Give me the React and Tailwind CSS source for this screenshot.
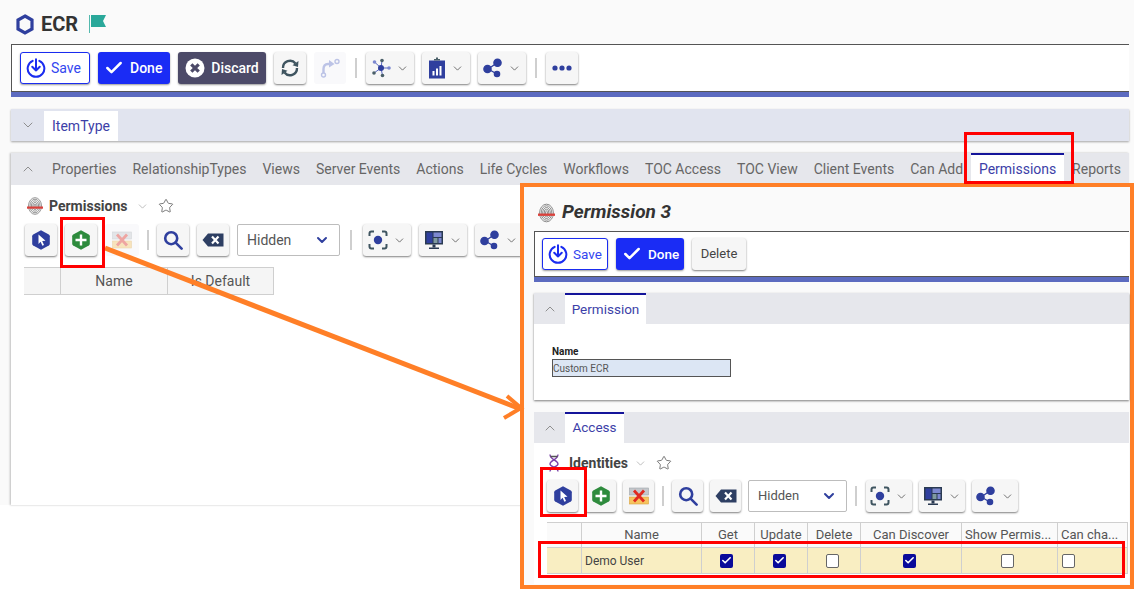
import { Check, ChevronDown, ChevronUp, Star } from "lucide-react";

const font = { fontFamily: "Roboto, sans-serif" };

const HexIcon = ({ fill = "#2f3f9e", children }) => (
  <svg width="18" height="20" viewBox="0 0 18 20">
    <path d="M9 0.3 L16.8 4.6 Q17.8 5.2 17.8 6.2 V13.8 Q17.8 14.8 16.8 15.4 L9 19.7 L1.2 15.4 Q0.2 14.8 0.2 13.8 V6.2 Q0.2 5.2 1.2 4.6 Z" fill={fill} />
    {children}
  </svg>
);

const HexPointer = () => (
  <HexIcon>
    <path d="M6.5 4.5 L13.5 10.8 L10.2 11 L12 15 L10.4 15.8 L8.6 11.8 L6.5 14 Z" fill="#fff" />
  </HexIcon>
);

const HexPlus = () => (
  <HexIcon fill="#2e8b3d">
    <path d="M9 4.5 V15.5 M3.5 10 H14.5" stroke="#fff" strokeWidth="2.4" />
  </HexIcon>
);

const SaveIcon = ({ size = 20 }) => (
  <svg width={size} height={size} viewBox="0 0 24 24" fill="none" stroke="#1a2cf0" strokeWidth="2.4" strokeLinecap="round" strokeLinejoin="round">
    <path d="M8 3.4 A10 10 0 1 0 16 3.4" />
    <path d="M12 1.5 V15 M7.5 10.5 L12 15 L16.5 10.5" />
  </svg>
);

const DiscardIcon = () => (
  <svg width="20" height="20" viewBox="0 0 20 20">
    <circle cx="10" cy="10" r="9.5" fill="#fff" />
    <path d="M6.3 6.3 L13.7 13.7 M13.7 6.3 L6.3 13.7" stroke="#4c4a68" strokeWidth="3.2" />
  </svg>
);

const RefreshIcon = () => (
  <svg width="20" height="20" viewBox="0 0 20 20" fill="none" stroke="#3f5560" strokeWidth="2.4">
    <path d="M3 10 A7 7 0 0 1 15.5 5.5" />
    <path d="M17 10 A7 7 0 0 1 4.5 14.5" />
    <path d="M18.5 3 L18 9 L12.5 7.2 Z" fill="#3f5560" stroke="none" />
    <path d="M1.5 17 L2 11 L7.5 12.8 Z" fill="#3f5560" stroke="none" />
  </svg>
);

const BranchIcon = () => (
  <svg width="20" height="20" viewBox="0 0 20 20" fill="none" stroke="#bcc3e6" strokeWidth="1.4">
    <circle cx="3.5" cy="17" r="2" />
    <circle cx="17" cy="3.5" r="2" />
    <path d="M3.5 15 V11 Q3.5 6 8 6 H9.5" strokeWidth="2.4" />
    <path d="M9 2 L14.5 6 L9 9.5 Z" fill="#bcc3e6" stroke="none" />
  </svg>
);

const ClusterIcon = () => (
  <svg width="20" height="20" viewBox="0 0 20 20" stroke="#5c6bc0" strokeWidth="1">
    <path d="M10 10 L3.5 4 M10 10 L11 2.5 M10 10 L18 10 M10 10 L11.5 17.5 M10 10 L3 15" />
    <circle cx="10" cy="10" r="3" fill="#2f3f9e" stroke="none" />
    <circle cx="3.5" cy="4" r="1.8" fill="#7c88d0" stroke="none" />
    <circle cx="11" cy="2.5" r="1.8" fill="#4a5f68" stroke="none" />
    <circle cx="18" cy="10" r="1.8" fill="#7c88d0" stroke="none" />
    <circle cx="11.5" cy="17.5" r="1.8" fill="#4a5f68" stroke="none" />
    <circle cx="3" cy="15" r="1.8" fill="#4a5f68" stroke="none" />
  </svg>
);

const ReportIcon = () => (
  <svg width="18" height="22" viewBox="0 0 18 22">
    <rect x="1" y="3.5" width="16" height="18" fill="#2f3f9e" />
    <path d="M6 3.5 V2 H8 V0.5 H10 V2 H12 V3.5 Z" fill="#4a5f68" />
    <rect x="4.5" y="14" width="2" height="4.5" fill="#fff" />
    <rect x="8" y="11.5" width="2" height="7" fill="#fff" />
    <rect x="11.5" y="9" width="2" height="9.5" fill="#fff" />
  </svg>
);

const ShareIcon = () => (
  <svg width="20" height="20" viewBox="0 0 20 20" stroke="#2f3f9e" strokeWidth="1.4">
    <path d="M5 11 L14 5 M5 11 L14 16" />
    <circle cx="4.5" cy="11" r="3.6" fill="#2f3f9e" />
    <circle cx="14.5" cy="4.8" r="3.6" fill="#2f3f9e" />
    <circle cx="14" cy="16" r="2.6" fill="#2f3f9e" />
  </svg>
);

const DotsIcon = () => (
  <svg width="20" height="6" viewBox="0 0 20 6" fill="#2f3f9e">
    <circle cx="3" cy="3" r="2.6" />
    <circle cx="10" cy="3" r="2.6" />
    <circle cx="17" cy="3" r="2.6" />
  </svg>
);

const DeleteRowIcon = ({ faded }) => (
  <svg width="20" height="20" viewBox="0 0 20 20" opacity={faded ? 0.4 : 1}>
    <rect x="0.5" y="2" width="19" height="7" fill="#c4c8cc" stroke="#9ea4a8" strokeWidth="0.6" />
    <rect x="0.5" y="11" width="19" height="7" fill="#f6c45f" stroke="#d9a23c" strokeWidth="0.6" />
    <path d="M5 4.5 L15 15.5 M15 4.5 L5 15.5" stroke="#e02a20" strokeWidth="2.8" />
  </svg>
);

const SearchIcon = () => (
  <svg width="20" height="20" viewBox="0 0 20 20" fill="none" stroke="#2f3f9e" strokeWidth="2.6">
    <circle cx="8.2" cy="8.2" r="6" />
    <path d="M12.6 12.6 L18.6 18.6" strokeLinecap="round" />
  </svg>
);

const BackspaceIcon = () => (
  <svg width="22" height="14" viewBox="0 0 22 14">
    <path d="M6 0.5 H21.5 V13.5 H6 L0.5 7 Z" fill="#2e3f63" />
    <path d="M10 3.5 L16.5 10.5 M16.5 3.5 L10 10.5" stroke="#fff" strokeWidth="2.2" />
  </svg>
);

const FocusIcon = () => (
  <svg width="20" height="20" viewBox="0 0 20 20" fill="none" stroke="#3f5560" strokeWidth="2">
    <path d="M6 1.5 H3.5 Q1.5 1.5 1.5 3.5 V6 M14 1.5 H16.5 Q18.5 1.5 18.5 3.5 V6 M6 18.5 H3.5 Q1.5 18.5 1.5 16.5 V14 M14 18.5 H16.5 Q18.5 18.5 18.5 16.5 V14" />
    <circle cx="10" cy="10" r="4.2" fill="#2f3f9e" stroke="none" />
  </svg>
);

const MonitorIcon = () => (
  <svg width="20" height="20" viewBox="0 0 20 20">
    <rect x="1" y="1" width="18" height="13.5" fill="#2a3a52" />
    <rect x="2.5" y="2.5" width="6" height="10.5" fill="#2f3f9e" />
    <rect x="9.5" y="2.5" width="8" height="4.5" fill="#7c88d0" />
    <rect x="9.5" y="8" width="4" height="5" fill="#7f9aa0" />
    <rect x="14.5" y="8" width="3" height="5" fill="#7c88d0" />
    <rect x="8.5" y="14.5" width="3" height="3" fill="#2a3a52" />
    <rect x="5" y="17.5" width="10" height="1.5" fill="#2a3a52" />
  </svg>
);

// grey fingerprint with the red scan line
const PrintIcon = ({ width = 16, height = 18 }) => (
  <svg width={width} height={height} viewBox="0 0 16 18" fill="none" stroke="#777" strokeWidth="0.8">
    <ellipse cx="8" cy="9" rx="6.5" ry="8.3" />
    <ellipse cx="8" cy="9" rx="5" ry="6.8" />
    <ellipse cx="8" cy="9" rx="3.6" ry="5.2" />
    <ellipse cx="8" cy="9" rx="2.2" ry="3.6" />
    <ellipse cx="8" cy="9" rx="0.9" ry="2" />
    <rect x="0" y="9.5" width="16" height="2.2" fill="#d9413b" stroke="none" />
  </svg>
);

const HelixIcon = () => (
  <svg width="14" height="18" viewBox="0 0 14 18" fill="none" stroke="#7a3fa8" strokeWidth="1.3">
    <path d="M3 0.5 C3 6 11 6 11 10 C11 13 3 13 3 17.5" />
    <path d="M11 0.5 C11 6 3 6 3 10 C3 13 11 13 11 17.5" />
    <path d="M3.5 2.5 H10.5 M3.5 14.5 H10.5" stroke="#555" />
  </svg>
);

// generic gray raised button
const ToolBtn = ({ children, className = "w-8", caret, disabled }) => (
  <div
    className={`h-8 flex items-center justify-center gap-[5px] rounded-[3px] shrink-0 ${
      disabled ? "bg-[#f9f9fb]" : "bg-[#f6f6f6] shadow-[0_1px_2px_rgba(0,0,0,0.5)]"
    } ${className}`}
  >
    {children}
    {caret && <ChevronDown size={13} color="#555" strokeWidth={1.5} />}
  </div>
);

const Sep = ({ className = "mx-[1px]" }) => <div className={`w-[2px] h-5 bg-[#cfcfcf] shrink-0 ${className}`} />;

const SaveBtn = ({ className }) => (
  <div className={`h-8 flex items-center justify-start gap-[5px] pl-[5px] bg-white border border-[#1a2cf0] rounded-[3px] shadow-[0_1px_2px_rgba(0,0,0,0.4)] text-[#3346f0] shrink-0 ${className}`}>
    <SaveIcon />
    Save
  </div>
);

const DoneBtn = ({ className }) => (
  <div className={`h-8 flex items-center justify-start gap-[6px] pl-[6px] bg-[#1a2cf5] rounded-[3px] shadow-[0_1px_2px_rgba(0,0,0,0.4)] font-medium text-white shrink-0 ${className}`}>
    <Check size={20} color="#fff" strokeWidth={3} />
    Done
  </div>
);

const HiddenSelect = ({ className }) => (
  <div className={`h-8 flex items-center justify-between pl-[9px] pr-[9px] bg-white border border-[#bdbdbd] rounded-[2px] text-[#555] shrink-0 ${className}`}>
    Hidden
    <ChevronDown size={16} color="#2f3f9e" strokeWidth={3} />
  </div>
);

const CheckCell = ({ on }) =>
  on ? (
    <div className="w-[13px] h-[14px] rounded-[2px] bg-[#0a0a9a] flex items-center justify-center">
      <Check size={11} color="#fff" strokeWidth={3.5} />
    </div>
  ) : (
    <div className="w-[13px] h-[14px] rounded-[2px] bg-white border border-[#666]" />
  );

const topTabs = [
  "Properties",
  "RelationshipTypes",
  "Views",
  "Server Events",
  "Actions",
  "Life Cycles",
  "Workflows",
  "TOC Access",
  "TOC View",
  "Client Events",
  "Can Add",
];

const columns = [
  { name: "Name", w: "w-[120px]" },
  { name: "Get", w: "w-[53px]", on: true },
  { name: "Update", w: "w-[53px]", on: true },
  { name: "Delete", w: "w-[53px]", on: false },
  { name: "Can Discover", w: "w-[101px]", on: true },
  { name: "Show Permis...", w: "w-[96px]", on: false, left: true },
  { name: "Can cha...", w: "w-[70px]", on: false, left: true },
];

const PanelHeader = ({ label, tabClass }) => (
  <div className="h-[31px] bg-[#e6e7ec] flex">
    <div className="w-[31px] flex items-center justify-center">
      <ChevronUp size={16} color="#888" strokeWidth={1.4} />
    </div>
    <div className={`bg-white border-t-2 border-[#14149a] flex items-center justify-center text-[13.5px] text-[#3d3fa8] ${tabClass}`}>
      {label}
    </div>
  </div>
);

export default function App() {
  return (
    <div className="relative w-[1134px] h-[590px] overflow-hidden bg-white" style={font}>
      {/* Background page */}
      <div className="h-[505px] bg-[#fafafa] pl-[11px] pr-[5px]">
        <div className="h-[44px] flex items-center pl-[5px] pt-[4px]">
          <svg width="18" height="21" viewBox="0 0 18 21" fill="none" stroke="#2f3f9e" strokeWidth="3.2">
            <path d="M9 2 L16 6 V15 L9 19 L2 15 V6 Z" />
          </svg>
          <span className="ml-[7px] text-[20px] font-bold text-[#333]">ECR</span>
          <svg width="18" height="18" viewBox="0 0 18 18" className="ml-[11px]">
            <path d="M0.5 0 V18" stroke="#2aa89a" strokeWidth="0.8" />
            <path d="M2 0 H17 L14 6 L17 12 H2 Z" fill="#2aa89a" />
          </svg>
        </div>

        {/* Main toolbar */}
        <div className="h-[48px] bg-white border-y border-l border-[#555] flex items-center gap-[8px] pl-[8px] text-[14px]">
          <SaveBtn className="w-[70px]" />
          <DoneBtn className="w-[72px]" />
          <div className="w-[88px] h-8 flex items-center justify-center gap-[6px] bg-[#4c4a68] rounded-[3px] shadow-[0_1px_2px_rgba(0,0,0,0.4)] font-medium text-white shrink-0">
            <DiscardIcon />
            Discard
          </div>
          <ToolBtn><RefreshIcon /></ToolBtn>
          <ToolBtn disabled><BranchIcon /></ToolBtn>
          <Sep />
          <ToolBtn className="w-[48px]" caret><ClusterIcon /></ToolBtn>
          <ToolBtn className="w-[48px]" caret><ReportIcon /></ToolBtn>
          <ToolBtn className="w-[48px]" caret><ShareIcon /></ToolBtn>
          <Sep />
          <ToolBtn><DotsIcon /></ToolBtn>
        </div>
        <div className="h-[5px] bg-[#5c6bc0]" />

        {/* ItemType bar */}
        <div className="mt-[12px] h-[32px] bg-[#e1e4ef] shadow-[0_1px_2px_rgba(0,0,0,0.35)] flex">
          <div className="w-[33px] flex items-center justify-center">
            <ChevronDown size={16} color="#888" strokeWidth={1.4} />
          </div>
          <div className="w-[74px] mt-[2px] bg-white flex items-center justify-center text-[14px] text-[#3d3fa8]">
            ItemType
          </div>
        </div>

        {/* Relationship tabs panel */}
        <div className="mt-[12px] h-[352px] bg-white shadow-[-1px_0_2px_rgba(0,0,0,0.25)]">
          <div className="h-[32px] bg-[#e6e7ec] flex text-[14px] text-[#666] whitespace-nowrap">
            <div className="w-[33px] flex items-center justify-center">
              <ChevronUp size={16} color="#888" strokeWidth={1.4} />
            </div>
            {topTabs.map((t) => (
              <div key={t} className="px-[8px] flex items-center">{t}</div>
            ))}
            <div className="w-[93px] bg-white border-t-2 border-[#14149a] pb-[2px] flex items-center justify-center text-[#3d3fa8]">
              Permissions
            </div>
            <div className="px-[8px] flex items-center">Reports</div>
          </div>

          <div className="pl-[14px] pt-[12px]">
            <div className="flex items-center h-[18px] pl-[2px]">
              <PrintIcon />
              <span className="ml-[6px] text-[14px] font-bold text-[#444]">Permissions</span>
              <ChevronDown size={13} color="#aaa" strokeWidth={1.4} className="ml-[9px]" />
              <Star size={16} color="#666" strokeWidth={1.3} className="ml-[9px]" />
            </div>
            <div className="mt-[9px] flex items-center gap-[8px] h-8 text-[14px]">
              <ToolBtn><HexPointer /></ToolBtn>
              <ToolBtn><HexPlus /></ToolBtn>
              <ToolBtn disabled className="w-[34px]"><DeleteRowIcon faded /></ToolBtn>
              <Sep className="" />
              <ToolBtn><SearchIcon /></ToolBtn>
              <ToolBtn><BackspaceIcon /></ToolBtn>
              <HiddenSelect className="w-[103px]" />
              <Sep className="ml-[2px] mr-[3px]" />
              <ToolBtn className="w-[48px]" caret><FocusIcon /></ToolBtn>
              <ToolBtn className="w-[48px]" caret><MonitorIcon /></ToolBtn>
              <ToolBtn className="w-[48px]" caret><ShareIcon /></ToolBtn>
            </div>
            <div className="mt-[11px] -ml-[1px] h-[28px] border-y border-r border-[#cfcfcf] bg-[#f5f5f5] flex w-[250px] text-[14px] text-[#555]">
              <div className="w-[37px] border-r border-[#cfcfcf]" />
              <div className="w-[107px] border-r border-[#cfcfcf] flex items-center justify-center">Name</div>
              <div className="flex-1 flex items-center justify-center">Is Default</div>
            </div>
          </div>
        </div>
      </div>

      {/* Callout panel laid over the page */}
      <div className="absolute left-[520px] top-[183px] w-[614px] h-[406px] bg-[#fafafa] border-4 border-[#ff7f27] pl-[10px] pr-[1px]">
        <div className="h-[44px] flex items-center pt-[7px] pl-[4px]">
          <PrintIcon width={17} height={20} />
          <span className="ml-[7px] text-[19px] italic font-bold text-[#333]">Permission 3</span>
        </div>
        <div className="h-[46px] bg-white border-y border-l border-[#555] flex items-center gap-[8px] pl-[7px] text-[13.5px]">
          <SaveBtn className="w-[66px]" />
          <DoneBtn className="w-[68px]" />
          <ToolBtn className="w-[54px] text-[13px] text-[#444]">Delete</ToolBtn>
        </div>
        <div className="h-[5px] bg-[#5c6bc0]" />

        <div className="mt-[11px] h-[107px] bg-white shadow-[0_1px_2px_rgba(0,0,0,0.5)]">
          <PanelHeader label="Permission" tabClass="w-[81px]" />
          <div className="pl-[18px] pt-[22px]">
            <div className="text-[10px] leading-[12px] font-bold text-[#222]">Name</div>
            <div className="mt-[1px] w-[179px] h-[18px] bg-[#dce6f4] border border-[#555] flex items-center text-[10px] text-[#555]">
              Custom ECR
            </div>
          </div>
        </div>

        <div className="mt-[12px] h-[172px] bg-white">
          <PanelHeader label="Access" tabClass="w-[59px] pb-[2px]" />
          <div className="pl-[13px] pt-[11px]">
            <div className="flex items-center h-[18px]">
              <HelixIcon />
              <span className="ml-[8px] text-[14px] font-bold text-[#444]">Identities</span>
              <ChevronDown size={13} color="#aaa" strokeWidth={1.4} className="ml-[6px]" />
              <Star size={16} color="#666" strokeWidth={1.3} className="ml-[9px]" />
            </div>
            <div className="mt-[8px] flex items-center gap-[7px] h-8 text-[13px]">
              <ToolBtn className="w-[31px]"><HexPointer /></ToolBtn>
              <ToolBtn className="w-[31px]"><HexPlus /></ToolBtn>
              <ToolBtn className="w-[31px]"><DeleteRowIcon /></ToolBtn>
              <Sep />
              <ToolBtn className="w-[31px]"><SearchIcon /></ToolBtn>
              <ToolBtn className="w-[31px]"><BackspaceIcon /></ToolBtn>
              <HiddenSelect className="w-[99px]" />
              <Sep className="ml-[1px] mr-[2px]" />
              <ToolBtn className="w-[46px]" caret><FocusIcon /></ToolBtn>
              <ToolBtn className="w-[46px]" caret><MonitorIcon /></ToolBtn>
              <ToolBtn className="w-[46px]" caret><ShareIcon /></ToolBtn>
            </div>
            <div className="mt-[10px] w-[581px] text-[13px] text-[#555] whitespace-nowrap">
              <div className="h-[26px] flex border-y border-[#cfcfcf] bg-[#fafafa]">
                <div className="w-[35px] border-r border-[#cfcfcf]" />
                {columns.map((c) => (
                  <div key={c.name} className={`${c.w} border-r border-[#cfcfcf] overflow-hidden flex items-center ${c.left ? "pl-[3px]" : "justify-center"}`}>
                    {c.name}
                  </div>
                ))}
              </div>
              <div className="h-[26px] flex border-b border-[#cfcfcf] bg-[#f9eec2]">
                <div className="w-[35px] border-r border-[#cfcfcf]" />
                {columns.map((c, i) => (
                  <div
                    key={c.name}
                    className={`${c.w} border-r border-[#cfcfcf] flex items-center ${
                      i === 0
                        ? "pl-[3px] text-[12px] text-[#444]"
                        : i === columns.length - 1
                          ? "pl-[4px]"
                          : "justify-center pr-[4px]"
                    }`}
                  >
                    {i === 0 ? "Demo User" : <CheckCell on={c.on} />}
                  </div>
                ))}
              </div>
            </div>
          </div>
        </div>
      </div>

      {/* Annotation arrow */}
      <svg className="absolute left-0 top-0 pointer-events-none" width="1134" height="590" fill="none" stroke="#ff7f27">
        <path d="M105 248 L518 408" strokeWidth="5" />
        <path d="M507 396 L521 408 L504 418" strokeWidth="4" />
      </svg>

      {/* Red annotation boxes */}
      <div className="absolute left-[60px] top-[217px] w-[45px] h-[51px] border-[3px] border-[#ff0000]" />
      <div className="absolute left-[964px] top-[132px] w-[110px] h-[52px] border-[3px] border-[#ff0000]" />
      <div className="absolute left-[540px] top-[467px] w-[47px] h-[50px] border-[3px] border-[#ff0000]" />
      <div className="absolute left-[538px] top-[541px] w-[587px] h-[37px] border-[3px] border-[#ff0000]" />
    </div>
  );
}
